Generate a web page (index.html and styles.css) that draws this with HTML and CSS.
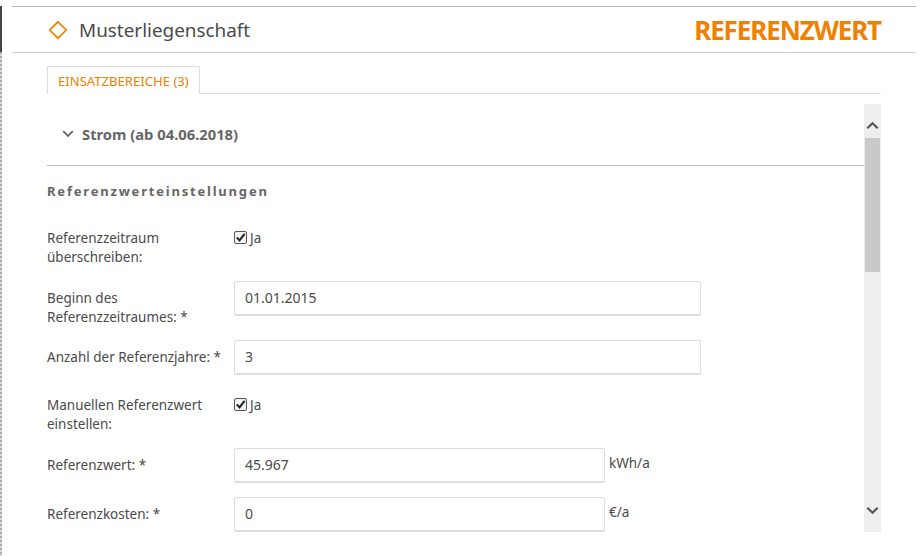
FILE: index.html
```html
<!DOCTYPE html>
<html lang="de">
<head>
<meta charset="utf-8">
<title>Referenzwert</title>
<link rel="stylesheet" href="styles.css">
</head>
<body>
<div class="page">
  <div class="strip"><div class="strip-dark"></div><div class="strip-dots"></div></div>
  <main class="main">
    <header class="header">
      <div class="title">
        <svg class="diamond" width="20" height="20" viewBox="0 0 20 20"><path d="M10 1.8 18.2 10 10 18.2 1.8 10Z" fill="none" stroke="#f08000" stroke-width="1.7"/></svg>
        <span>Musterliegenschaft</span>
      </div>
      <div class="brand">REFERENZWERT</div>
    </header>
    <div class="content">
      <div class="tabs"><div class="tab">EINSATZBEREICHE (3)</div></div>
      <div class="scroll">
        <div class="form">
          <div class="acc">
            <svg class="chev" width="12" height="8" viewBox="0 0 12 8"><path d="M1.2 1.2 6 6 10.8 1.2" fill="none" stroke="#666" stroke-width="1.8"/></svg>
            <span>Strom (ab 04.06.2018)</span>
          </div>
          <h2 class="sect">Referenzwerteinstellungen</h2>
          <div class="row r1">
            <label class="lbl">Referenzzeitraum<br>überschreiben:</label>
            <div class="chk"><span class="box"><svg width="11" height="11" viewBox="0 0 11 11"><path d="M1.8 5.4 4.5 8.4 9.6 1.8" fill="none" stroke="#222" stroke-width="2"/></svg></span>Ja</div>
          </div>
          <div class="row r2">
            <label class="lbl pad">Beginn des<br>Referenzzeitraumes: *</label>
            <div class="inp wide">01.01.2015</div>
          </div>
          <div class="row r3">
            <label class="lbl pad">Anzahl der Referenzjahre: *</label>
            <div class="inp wide">3</div>
          </div>
          <div class="row r4">
            <label class="lbl">Manuellen Referenzwert<br>einstellen:</label>
            <div class="chk"><span class="box"><svg width="11" height="11" viewBox="0 0 11 11"><path d="M1.8 5.4 4.5 8.4 9.6 1.8" fill="none" stroke="#222" stroke-width="2"/></svg></span>Ja</div>
          </div>
          <div class="row r5">
            <label class="lbl pad">Referenzwert: *</label>
            <div class="inp short">45.967</div><span class="unit">kWh/a</span>
          </div>
          <div class="row r6">
            <label class="lbl pad">Referenzkosten: *</label>
            <div class="inp short">0</div><span class="unit">€/a</span>
          </div>
        </div>
        <div class="bar">
          <svg class="arrow" width="13" height="9" viewBox="0 0 13 9"><path d="M1.3 7.3 6.5 2.2 11.7 7.3" fill="none" stroke="#555" stroke-width="2.2"/></svg>
          <div class="thumb"></div>
          <svg class="arrow down" width="13" height="9" viewBox="0 0 13 9"><path d="M1.3 1.7 6.5 6.8 11.7 1.7" fill="none" stroke="#555" stroke-width="2.2"/></svg>
        </div>
      </div>
    </div>
  </main>
</div>
</body>
</html>
```

FILE: styles.css
```css
* { box-sizing: border-box; }
html, body { margin: 0; height: 100%; overflow: hidden; background: #fff; }
body { font-family: "Noto Sans", "Open Sans", sans-serif; font-size: 13.5px; color: #4a4a4a; }
.page { display: flex; height: 556px; padding-top: 6px; }
.strip { width: 12px; flex: none; display: flex; flex-direction: column; }
.strip-dark { width: 2px; height: 46px; background: #444; }
.strip-dots { width: 2px; flex: 1; background: repeating-linear-gradient(#aaa 0 2px, #d8d8d8 2px 4px); }
.main { width: 904px; flex: none; }
.header { height: 47px; border-top: 1px solid #b8b8b8; border-bottom: 1px solid #ccc; padding: 0 35px 0 36px; display: flex; align-items: center; justify-content: space-between; }
.title { display: flex; align-items: center; gap: 11px; font-size: 18.9px; color: #4a4a4a; }
.diamond { flex: none; }
.brand { font-size: 26px; font-weight: 700; color: #f08000; letter-spacing: -1.1px; }
.content { padding: 0 35px; margin-top: 13px; }
.tabs { height: 28px; border-bottom: 1px solid #ddd; }
.tab { width: 153px; height: 28px; border: 1px solid #ddd; border-bottom: 0; background: #fff; color: #f08000; font-size: 13.1px; line-height: 29px; padding-left: 10px; white-space: nowrap; }
.scroll { display: flex; height: 428px; margin-top: 10px; }
.form { width: 817px; flex: none; }
.acc { height: 62px; border-bottom: 1px solid #bbb; display: flex; align-items: center; gap: 8px; padding: 0 0 2px 15px; font-weight: 700; font-size: 14.75px; color: #666; }
.sect { margin: 16px 0 0; font-size: 13px; line-height: 19px; font-weight: 700; letter-spacing: 1.8px; color: #666; }
.row { display: grid; grid-template-columns: 187px auto 1fr; align-items: start; }
.lbl { line-height: 19px; white-space: nowrap; }
.pad { padding-top: 8px; }
.r1 { margin-top: 28px; height: 52px; }
.r2 { height: 59px; }
.r3 { height: 56px; }
.r4 { height: 52px; }
.r5 { height: 49px; }
.r6 { height: 35px; }
.chk { display: flex; align-items: center; height: 19px; gap: 3px; margin-top: -1px; }
.box { width: 13px; height: 13px; border: 1px solid #555; border-radius: 2px; display: flex; align-items: center; justify-content: center; background: #f4f4f4; }
.inp { height: 35px; border: 1px solid #ddd; border-bottom: 2px solid #ddd; border-radius: 2px; line-height: 32px; padding-left: 10px; background: #fff; font-size: 14px; }
.wide { width: 467px; }
.short { width: 371px; }
.unit { padding-top: 6px; margin-left: 4px; }
.bar { width: 17px; flex: none; background: #eee; display: flex; flex-direction: column; align-items: center; }
.arrow { flex: none; margin-top: 17px; }
.thumb { width: 15px; height: 134px; background: #c9c9c9; margin-top: 8px; }
.down { margin-top: auto; margin-bottom: 17px; }
```
